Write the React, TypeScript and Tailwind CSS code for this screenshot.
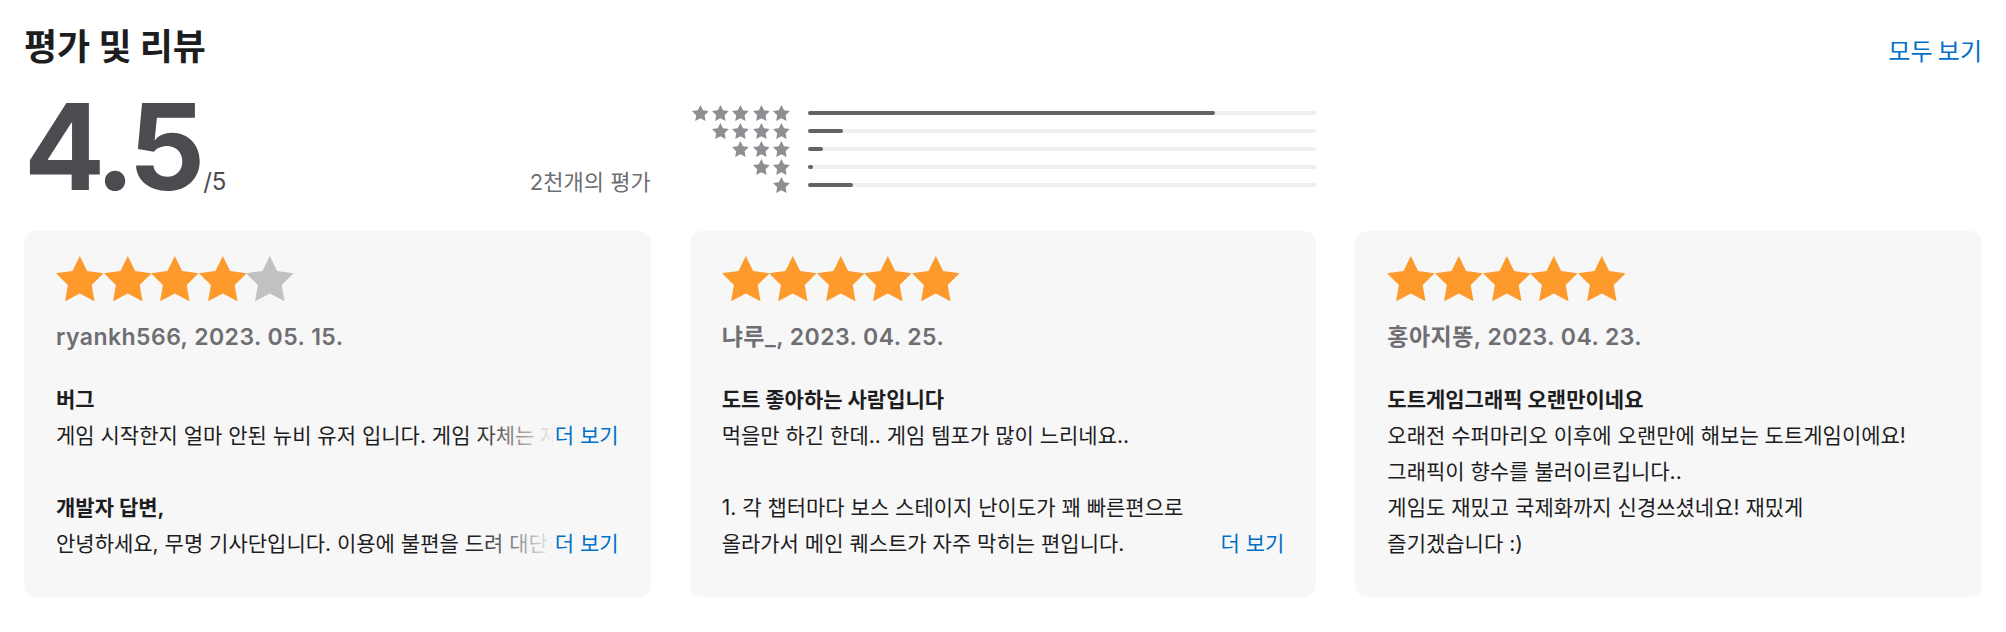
import React from "react";

const STAR_PATH =
  "M12 2l3.09 6.26L22 9.27l-5 4.87 1.18 6.88L12 17.77l-6.18 3.25L7 14.14 2 9.27l6.91-1.01L12 2z";

function Star({ className, color }: { className: string; color: string }) {
  return (
    <svg viewBox="2 2 20 19.02" className={className} fill={color}>
      <path d={STAR_PATH} />
    </svg>
  );
}

const histogram = [
  { stars: 5, pct: 80 },
  { stars: 4, pct: 6.9 },
  { stars: 3, pct: 3 },
  { stars: 2, pct: 1 },
  { stars: 1, pct: 9 },
];

function CardStars({ count }: { count: number }) {
  return (
    <div className="flex h-[46px]">
      {[0, 1, 2, 3, 4].map((i) => (
        <Star
          key={i}
          className="w-[47.6px] h-[45.3px]"
          color={i < count ? "#fd9a2b" : "#c1c1c1"}
        />
      ))}
    </div>
  );
}

function FadeLine({ text }: { text: string }) {
  return (
    <div className="relative overflow-hidden whitespace-nowrap">
      {text}
      <span className="absolute right-0 top-0 flex h-full">
        <span className="w-[80px] bg-linear-to-r from-[#f7f7f7]/0 to-[#f7f7f7]" />
        <span className="bg-[#f7f7f7] text-[#0070c9]">더 보기</span>
      </span>
    </div>
  );
}

function Card({
  count,
  user,
  children,
}: {
  count: number;
  user: string;
  children: React.ReactNode;
}) {
  return (
    <div className="h-[366px] rounded-[12px] bg-[#f7f7f7] px-[32px] pt-[25px]">
      <CardStars count={count} />
      <div className="mt-[17px] text-[23px] leading-[36px] font-semibold tracking-[0.02em] text-[#6e6e73]">
        {user}
      </div>
      <div className="mt-[27px] text-[21px] leading-[36px] text-[#1d1d1f]">
        {children}
      </div>
    </div>
  );
}

export default function App() {
  return (
    <div className="w-[2006px] h-[632px] bg-white px-[24px] font-['Inter','Noto_Sans_CJK_KR',sans-serif] text-[#1d1d1f]">
      {/* header */}
      <div className="flex items-baseline justify-between pt-[22px]">
        <h2 className="text-[36px] leading-[45px] font-bold font-['Noto_Sans_CJK_KR',sans-serif] text-[#1d1d1f]">
          평가 및 리뷰
        </h2>
        <a className="text-[24px] leading-[45px] text-[#0070c9] font-['Noto_Sans_CJK_KR',sans-serif]">
          모두 보기
        </a>
      </div>

      {/* summary */}
      <div className="mt-[15px] grid grid-cols-3 gap-[39px]">
        <div className="flex items-baseline justify-between">
          <div className="flex items-baseline">
            <span className="text-[120px] leading-none font-bold tracking-[-0.05em] text-[#4b4b50]">
              4.5
            </span>
            <span className="ml-[4px] text-[24px] leading-none text-[#4b4b50]">/5</span>
          </div>
          <span className="text-[22px] leading-none text-[#6e6e73]">2천개의 평가</span>
        </div>
        <div className="flex flex-col pt-[17px]">
          {histogram.map((row) => (
            <div key={row.stars} className="flex h-[18px] items-center">
              <div className="flex w-[100px] justify-end gap-[3.5px]">
                {Array.from({ length: row.stars }).map((_, i) => (
                  <Star key={i} className="w-[16.8px] h-[16px]" color="#8e8e93" />
                ))}
              </div>
              <div className="ml-[18px] h-[4px] flex-1 rounded-full bg-[#efeff2]">
                <div
                  className="h-full min-w-[4px] rounded-full bg-[#636366]"
                  style={{ width: `${row.pct}%` }}
                />
              </div>
            </div>
          ))}
        </div>
        <div />
      </div>

      {/* cards */}
      <div className="mt-[24px] grid grid-cols-3 gap-[39px]">
        <Card count={4} user="ryankh566, 2023. 05. 15.">
          <div className="font-bold">버그</div>
          <FadeLine text="게임 시작한지 얼마 안된 뉴비 유저 입니다. 게임 자체는 재미있는데 버그가 좀 있네요." />
          <div className="h-[36px]" />
          <div className="font-bold">개발자 답변,</div>
          <FadeLine text="안녕하세요, 무명 기사단입니다. 이용에 불편을 드려 대단히 죄송합니다." />
        </Card>
        <Card count={5} user="냐루_, 2023. 04. 25.">
          <div className="font-bold">도트 좋아하는 사람입니다</div>
          <div className="whitespace-nowrap">먹을만 하긴 한데.. 게임 템포가 많이 느리네요..</div>
          <div className="h-[36px]" />
          <div className="whitespace-nowrap">1. 각 챕터마다 보스 스테이지 난이도가 꽤 빠른편으로</div>
          <div className="flex justify-between whitespace-nowrap">
            <span>올라가서 메인 퀘스트가 자주 막히는 편입니다.</span>
            <span className="text-[#0070c9]">더 보기</span>
          </div>
        </Card>
        <Card count={5} user="홍아지똥, 2023. 04. 23.">
          <div className="font-bold">도트게임그래픽 오랜만이네요</div>
          <div className="whitespace-nowrap">오래전 수퍼마리오 이후에 오랜만에 해보는 도트게임이에요!</div>
          <div className="whitespace-nowrap">그래픽이 향수를 불러이르킵니다..</div>
          <div className="whitespace-nowrap">게임도 재밌고 국제화까지 신경쓰셨네요! 재밌게</div>
          <div className="whitespace-nowrap">즐기겠습니다 :)</div>
        </Card>
      </div>
    </div>
  );
}
